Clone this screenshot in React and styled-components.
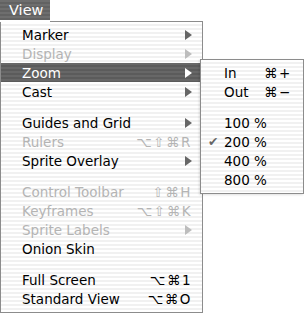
import React from 'react';
import styled, { createGlobalStyle, css } from 'styled-components';

const GlobalStyle = createGlobalStyle`
  html, body {
    margin: 0;
    padding: 0;
    background: #fff;
  }
  body {
    font-family: "DejaVu Sans", "Liberation Sans", sans-serif;
  }
`;

const pinstripe = (a, b) => css`
  background: repeating-linear-gradient(
    to bottom,
    ${a} 0px,
    ${a} 2px,
    ${b} 2px,
    ${b} 4px
  );
`;

const Screen = styled.div`
  position: relative;
  width: 304px;
  height: 314px;
  overflow: hidden;
`;

const MenuBar = styled.div`
  display: flex;
  width: 203px;
  height: 22px;
`;

const Tab = styled.div`
  width: 50px;
  height: 20px;
  box-sizing: border-box;
  padding-left: 9px;
  ${pinstripe('#6e6e6e', '#626262')}
  color: #fff;
  font-size: 14.5px;
  line-height: 20px;
`;

const BarRest = styled.div`
  flex: 1;
  border-bottom: 1px solid #8c8c8c;
`;

const Panel = styled.div`
  width: 203px;
  box-sizing: border-box;
  border: 1px solid #8c8c8c;
  border-top: none;
  padding: 3px 0 4px;
  ${pinstripe('#ffffff', '#f1f1f1')}
`;

const SubPanel = styled.div`
  position: absolute;
  left: 200px;
  top: 59px;
  width: 104px;
  height: 135px;
  box-sizing: border-box;
  border: 1px solid #8c8c8c;
  padding-top: 3px;
  ${pinstripe('#ffffff', '#f1f1f1')}
  box-shadow: -1px 1px 2px rgba(0, 0, 0, 0.12);
`;

const Row = styled.div`
  display: flex;
  align-items: center;
  height: 19px;
  padding: 0 10px 0 21px;
  font-size: 13.5px;
  color: ${(p) => (p.$disabled ? '#b4b4b4' : '#000')};
  ${(p) => p.$active && css`
    ${pinstripe('#676767', '#5b5b5b')}
    color: #fff;
  `}
`;

const Label = styled.span`
  flex: 1;
  white-space: nowrap;
`;

const Shortcut = styled.span`
  font-size: 13.5px;
  letter-spacing: 1.5px;
  white-space: nowrap;
  color: ${(p) => (p.$disabled ? '#b4b4b4' : '#000')};
`;

const Separator = styled.div`
  height: 12px;
`;

const SubRow = styled.div`
  display: flex;
  align-items: center;
  height: 19px;
  font-size: 13.5px;
  color: #000;
  white-space: nowrap;
`;

const Check = styled.span`
  width: 23px;
  flex: none;
  padding-left: 7px;
  box-sizing: border-box;
  font-size: 12.5px;
  color: #666;
`;

const SubLabel = styled.span`
  min-width: 40px;
  white-space: nowrap;
`;

const Arrow = ({ color }) => (
  <svg width="7" height="10" viewBox="0 0 7 10">
    <polygon points="0,0 7,5 0,10" fill={color} />
  </svg>
);

const items = [
  { label: 'Marker', arrow: true },
  { label: 'Display', arrow: true, disabled: true },
  { label: 'Zoom', arrow: true, active: true },
  { label: 'Cast', arrow: true },
  { sep: true },
  { label: 'Guides and Grid', arrow: true },
  { label: 'Rulers', shortcut: '⌥⇧⌘R', disabled: true },
  { label: 'Sprite Overlay', arrow: true },
  { sep: true },
  { label: 'Control Toolbar', shortcut: '⇧⌘H', disabled: true },
  { label: 'Keyframes', shortcut: '⌥⇧⌘K', disabled: true },
  { label: 'Sprite Labels', arrow: true, disabled: true },
  { label: 'Onion Skin' },
  { sep: true },
  { label: 'Full Screen', shortcut: '⌥⌘1' },
  { label: 'Standard View', shortcut: '⌥⌘O' },
];

const zoomItems = [
  { label: 'In', shortcut: '⌘+' },
  { label: 'Out', shortcut: '⌘−' },
  { sep: true },
  { label: '100 %' },
  { label: '200 %', checked: true },
  { label: '400 %' },
  { label: '800 %' },
];

export default function App() {
  return (
    <>
      <GlobalStyle />
      <Screen>
        <MenuBar>
          <Tab>View</Tab>
          <BarRest />
        </MenuBar>
        <Panel>
          {items.map((it, i) =>
            it.sep ? (
              <Separator key={i} />
            ) : (
              <Row key={i} $disabled={it.disabled} $active={it.active}>
                <Label>{it.label}</Label>
                {it.shortcut && <Shortcut $disabled={it.disabled}>{it.shortcut}</Shortcut>}
                {it.arrow && (
                  <Arrow color={it.active ? '#fff' : it.disabled ? '#bdbdbd' : '#666'} />
                )}
              </Row>
            )
          )}
        </Panel>
        <SubPanel>
          {zoomItems.map((it, i) =>
            it.sep ? (
              <Separator key={i} />
            ) : (
              <SubRow key={i}>
                <Check>{it.checked ? '✔' : ''}</Check>
                <SubLabel>{it.label}</SubLabel>
                {it.shortcut && <Shortcut>{it.shortcut}</Shortcut>}
              </SubRow>
            )
          )}
        </SubPanel>
      </Screen>
    </>
  );
}
